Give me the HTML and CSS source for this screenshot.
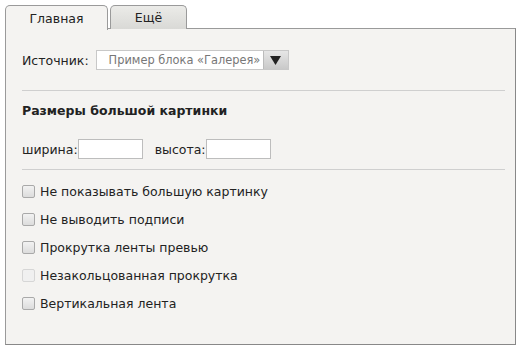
FILE: index.html
```html
<!DOCTYPE html>
<html lang="ru">
<head>
<meta charset="utf-8">
<link rel="stylesheet" href="styles.css">
</head>
<body>
<div class="tabs">
  <div class="tab active">Главная</div>
  <div class="tab">Ещё</div>
</div>
<div class="panel">
  <div class="row source">
    <span class="label">Источник:</span>
    <div class="select">
      <span class="select-text">Пример блока «Галерея»</span>
      <span class="select-btn"><svg width="11" height="9" viewBox="0 0 11 9"><path d="M0 0H11L5.5 9Z" fill="#222"/></svg></span>
    </div>
  </div>
  <div class="sep"></div>
  <div class="heading">Размеры большой картинки</div>
  <div class="row sizes">
    <span class="label">ширина:</span><span class="input"></span>
    <span class="label second">высота:</span><span class="input"></span>
  </div>
  <div class="sep"></div>
  <ul class="checks">
    <li><span class="cb"></span>Не показывать большую картинку</li>
    <li><span class="cb"></span>Не выводить подписи</li>
    <li><span class="cb"></span>Прокрутка ленты превью</li>
    <li><span class="cb disabled"></span>Незакольцованная прокрутка</li>
    <li><span class="cb"></span>Вертикальная лента</li>
  </ul>
</div>
</body>
</html>
```
FILE: styles.css
```css
html, body { margin: 0; padding: 0; background: #fff; }
body {
  padding: 5px 0 0 5px;
  font-family: "DejaVu Sans", Verdana, sans-serif;
  font-size: 12.5px;
  color: #222;
}
.tabs { display: flex; gap: 2px; height: 24px; position: relative; z-index: 1; margin-bottom: -1px; }
.tab {
  box-sizing: border-box;
  border: 1px solid #9a9a9a;
  border-bottom: none;
  border-radius: 5px 5px 0 0;
  height: 24px;
  display: flex; align-items: center; justify-content: center;
  background: linear-gradient(#ebebe8, #d9d9d6);
}
.tab.active { width: 103px; height: 25px; background: #f4f3f1; }
.tab:not(.active) { width: 77px; }
.panel {
  width: 511px;
  height: 317px;
  box-sizing: border-box;
  background: #f4f3f1;
  border: 1px solid #9a9a9a;
  border-right-color: #888;
  border-bottom-color: #888;
  padding: 0 10px 0 16px;
}
.row { display: flex; align-items: center; }
.source { margin-top: 21px; height: 20px; }
.select {
  margin-left: 7px;
  width: 193px; height: 20px;
  box-sizing: border-box;
  border: 1px solid #c8c8c8;
  background: #fff;
  display: flex; align-items: center;
}
.select-text { flex: 1; color: #777; padding-left: 12px; white-space: nowrap; overflow: hidden; font-size: 11.4px; }
.select-btn {
  width: 24px; height: 18px;
  border-left: 1px solid #bbb;
  background: linear-gradient(#e6e6e6, #c9c9c9);
  display: flex; align-items: center; justify-content: center;
}
.sep { height: 1px; background: #cfcfcf; }
.source + .sep { margin-top: 20px; }
.heading { font-weight: bold; margin-top: 12px; height: 15px; line-height: 15px; }
.sizes { margin-top: 21px; height: 20px; }
.input {
  width: 65px; height: 20px; box-sizing: border-box;
  border: 1px solid #bdbdbd; background: #fff;
}
.second { margin-left: 12px; }
.sizes + .sep { margin-top: 10px; }
.checks { list-style: none; margin: 13px 0 0; padding: 0; }
.checks li { display: flex; align-items: center; height: 16px; margin-bottom: 12px; }
.cb {
  width: 11px; height: 11px;
  border: 1px solid #a9a9a9; border-radius: 2px;
  background: linear-gradient(#f2f2f2, #dcdcdc);
  margin: 0 5px 0 0;
  flex: none;
}
.cb.disabled { border-color: #d6d6d6; background: #f0f0f0; }
```
